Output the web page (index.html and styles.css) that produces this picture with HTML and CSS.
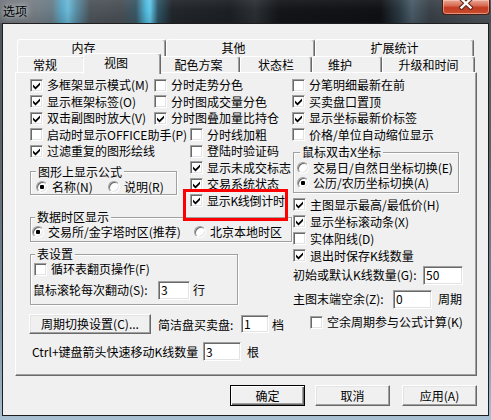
FILE: index.html
```html
<!DOCTYPE html>
<html lang="zh-CN">
<head>
<meta charset="utf-8">
<title>选项</title>
<link rel="stylesheet" href="styles.css">
</head>
<body>
<div class="win">
  <div class="titlebar">
    <span class="title">选项</span>
    <span class="close"><svg width="14" height="10" viewBox="0 0 14 10"><path d="M2.5 -1 L11.5 7.5 M11.5 -1 L2.5 7.5" stroke="#5b1f12" stroke-width="4.4" stroke-linecap="square"/><path d="M2.5 -1 L11.5 7.5 M11.5 -1 L2.5 7.5" stroke="#fff" stroke-width="2.4" stroke-linecap="square"/></svg></span>
  </div>
  <div class="client">
    <div class="tabctl">
      <div class="tabrow back">
        <div class="tab">内存</div>
        <div class="tab">其他</div>
        <div class="tab">扩展统计</div>
      </div>
      <div class="tabrow front">
        <div class="tab">常规</div>
        <div class="tab sel">视图</div>
        <div class="tab">配色方案</div>
        <div class="tab">状态栏</div>
        <div class="tab">维护</div>
        <div class="tab">升级和时间</div>
      </div>
      <div class="panel">
        <div class="left">
          <div class="ab">
            <div class="colA">
              <div class="cb-row"><span class="box"><svg viewBox="0 0 11 11"><path d="M2 4.5 L4.5 7 L9 2.5 L9 5 L4.5 9.5 L2 7 Z"/></svg></span>多框架显示模式(M)</div>
              <div class="cb-row"><span class="box"><svg viewBox="0 0 11 11"><path d="M2 4.5 L4.5 7 L9 2.5 L9 5 L4.5 9.5 L2 7 Z"/></svg></span>显示框架标签(O)</div>
              <div class="cb-row"><span class="box"><svg viewBox="0 0 11 11"><path d="M2 4.5 L4.5 7 L9 2.5 L9 5 L4.5 9.5 L2 7 Z"/></svg></span>双击副图时放大(V)</div>
              <div class="cb-row"><span class="box"></span>启动时显示OFFICE助手(P)</div>
              <div class="cb-row"><span class="box"><svg viewBox="0 0 11 11"><path d="M2 4.5 L4.5 7 L9 2.5 L9 5 L4.5 9.5 L2 7 Z"/></svg></span>过滤重复的图形绘线</div>
              <fieldset class="grp g1">
                <legend class="lg0">图形上显示公式</legend>
                <div class="rrow">
                  <span class="opt o1"><span class="rad on"></span>名称(N)</span>
                  <span class="opt"><span class="rad"></span>说明(R)</span>
                </div>
              </fieldset>
            </div>
            <div class="colB">
              <div class="cb-row"><span class="box"></span>分时走势分色</div>
              <div class="cb-row"><span class="box"></span>分时图成交量分色</div>
              <div class="cb-row"><span class="box"><svg viewBox="0 0 11 11"><path d="M2 4.5 L4.5 7 L9 2.5 L9 5 L4.5 9.5 L2 7 Z"/></svg></span>分时图叠加量比持仓</div>
              <div class="cb-row ind"><span class="box"></span>分时线加粗</div>
              <div class="cb-row ind"><span class="box"></span>登陆时验证码</div>
              <div class="cb-row ind"><span class="box"><svg viewBox="0 0 11 11"><path d="M2 4.5 L4.5 7 L9 2.5 L9 5 L4.5 9.5 L2 7 Z"/></svg></span>显示未成交标志</div>
              <div class="cb-row ind"><span class="box"><svg viewBox="0 0 11 11"><path d="M2 4.5 L4.5 7 L9 2.5 L9 5 L4.5 9.5 L2 7 Z"/></svg></span>交易系统状态</div>
              <div class="cb-row ind kline"><span class="box"><svg viewBox="0 0 11 11"><path d="M2 4.5 L4.5 7 L9 2.5 L9 5 L4.5 9.5 L2 7 Z"/></svg></span><span class="tight">显示K线倒计时</span><span class="mark"></span></div>
            </div>
          </div>
          <fieldset class="grp g2">
            <legend class="lg4">数据时区显示</legend>
            <div class="rrow r16">
              <span class="opt o2"><span class="rad on"></span>交易所/金字塔时区(推荐)</span>
              <span class="opt"><span class="rad"></span>北京本地时区</span>
            </div>
          </fieldset>
          <fieldset class="grp g3">
            <legend class="lg4">表设置</legend>
            <div class="cb-row h16 ml3"><span class="box"></span>循环表翻页操作(F)</div>
            <div class="inrow ir1">
              <span class="lbl w125">鼠标滚轮每次翻动(S):</span>
              <span class="edit e32">3</span>
              <span class="after3">行</span>
            </div>
          </fieldset>
          <div class="btnrow">
            <span class="btn bw122">周期切换设置(C)...</span>
            <span class="lbl w83 ml7">简洁盘买卖盘:</span>
            <span class="edit e28">1</span>
            <span class="after3">档</span>
          </div>
          <div class="ctrlrow">
            <span class="lbl w171">Ctrl+键盘箭头快速移动K线数量</span>
            <span class="edit e38">3</span>
            <span class="after6">根</span>
          </div>
        </div>
        <div class="right">
          <div class="cb-row mlm1"><span class="box"></span>分笔明细最新在前</div>
          <div class="cb-row mlm1"><span class="box"><svg viewBox="0 0 11 11"><path d="M2 4.5 L4.5 7 L9 2.5 L9 5 L4.5 9.5 L2 7 Z"/></svg></span>买卖盘口置顶</div>
          <div class="cb-row mlm1"><span class="box"><svg viewBox="0 0 11 11"><path d="M2 4.5 L4.5 7 L9 2.5 L9 5 L4.5 9.5 L2 7 Z"/></svg></span>显示坐标最新价标签</div>
          <div class="cb-row mlm1"><span class="box"></span>价格/单位自动缩位显示</div>
          <fieldset class="grp g4">
            <legend class="lg6">鼠标双击X坐标</legend>
            <div class="rrow r155 ml3"><span class="opt"><span class="rad"></span>交易日/自然日坐标切换(E)</span></div>
            <div class="rrow r155 ml3"><span class="opt"><span class="rad on"></span>公历/农历坐标切换(A)</span></div>
          </fieldset>
          <div class="checks4">
            <div class="cb-row h17"><span class="box"><svg viewBox="0 0 11 11"><path d="M2 4.5 L4.5 7 L9 2.5 L9 5 L4.5 9.5 L2 7 Z"/></svg></span>主图显示最高/最低价(H)</div>
            <div class="cb-row h17"><span class="box"><svg viewBox="0 0 11 11"><path d="M2 4.5 L4.5 7 L9 2.5 L9 5 L4.5 9.5 L2 7 Z"/></svg></span>显示坐标滚动条(X)</div>
            <div class="cb-row h17"><span class="box"></span>实体阳线(D)</div>
            <div class="cb-row h17"><span class="box"><svg viewBox="0 0 11 11"><path d="M2 4.5 L4.5 7 L9 2.5 L9 5 L4.5 9.5 L2 7 Z"/></svg></span>退出时保存K线数量</div>
          </div>
          <div class="inrow ir2">
            <span class="lbl w130">初始或默认K线数量(G):</span>
            <span class="edit e40">50</span>
          </div>
          <div class="inrow ir3">
            <span class="lbl w100">主图末端空余(Z):</span>
            <span class="edit e39">0</span>
            <span class="after6">周期</span>
          </div>
          <div class="cb-row h16 last"><span class="box"></span>空余周期参与公式计算(K)</div>
        </div>
      </div>
    </div>
    <div class="btns">
      <span class="btn def">确定</span>
      <span class="btn g10">取消</span>
      <span class="btn g12">应用(A)</span>
    </div>
  </div>
</div>
</body>
</html>
```
FILE: styles.css
```css
* { box-sizing: border-box; }
html, body { margin: 0; padding: 0; }
body {
  width: 491px;
  height: 420px;
  overflow: hidden;
  font-family: "Noto Sans CJK SC", "Noto Sans", sans-serif;
  font-size: 12px;
  color: #000;
  background: #2a2e33;
}
.win {
  width: 491px;
  height: 420px;
  display: flex;
  flex-direction: column;
  background: linear-gradient(180deg, #4c5257 0, #5d636a 150px, #7890a6 330px, #a9bfd2 420px);
}
.titlebar {
  height: 23px;
  flex: none;
  display: flex;
  justify-content: space-between;
  align-items: flex-start;
  background:
    linear-gradient(180deg, rgba(255,255,255,0.06) 0, rgba(0,0,0,0) 10px, rgba(0,0,0,0.12) 23px),
    linear-gradient(90deg, #6f757a 0, #797f84 30px, #6a7d88 52px, #5aa7c6 62px, #6cb9d6 68px, #5a8fa6 76px, #4e555b 90px, #4b5056 120px, #3a5866 136px, #4fb8dc 146px, #63c8ea 150px, #2e5566 158px, #22272b 172px, #1c2024 230px, #2b3034 255px, #131518 280px, #0f1114 380px, #2c3a44 400px, #4a5c68 412px, #3a4148 430px, #4e565d 491px);
}
.title {
  margin: 4px 0 0 3px;
  line-height: 14px;
  text-shadow: 0 0 5px rgba(215,225,230,0.9), 0 0 9px rgba(215,225,230,0.7);
}
.close {
  width: 48px;
  height: 15px;
  margin-right: 1px;
  border: 1px solid #4a1c12;
  border-top: none;
  border-radius: 0 0 4px 4px;
  background: linear-gradient(180deg, #e9a896 0, #d86a52 40%, #c23b20 55%, #c94e31 100%);
  box-shadow: inset 0 0 0 1px rgba(255,215,200,0.5);
  display: flex;
  justify-content: center;
  align-items: flex-start;
}
.close svg { display: block; }

.client {
  flex: 1;
  margin: 0 2px 4px 2px;
  border: 1px solid #1e1e1e;
  background: #f0f0f0;
}
.tabctl {
  margin: 15px 0 0 12px;
  width: 462px;
}
.tabrow { display: flex; padding-left: 2px; }
.back { height: 17px; }
.front { height: 16px; }
.tab {
  flex: none;
  height: 100%;
  border-top: 1px solid #fff;
  border-left: 1px solid #fff;
  border-right: 1px solid #696969;
  border-radius: 3px 3px 0 0;
  box-shadow: inset -1px 0 0 #a0a0a0;
  display: flex;
  align-items: center;
  justify-content: center;
  line-height: 14px;
  background: #f0f0f0;
  white-space: nowrap;
}
.back .tab:nth-child(1) { width: 149px; padding-right: 16px; }
.back .tab:nth-child(2) { width: 149px; padding-right: 14px; }
.back .tab:nth-child(3) { width: 159px; }
.front .tab:nth-child(1) { width: 68px; padding-right: 12px; }
.front .tab:nth-child(2) { width: 74px; }
.front .tab:nth-child(3) { width: 81px; padding-right: 2px; }
.front .tab:nth-child(4) { width: 72px; }
.front .tab:nth-child(5) { width: 70px; padding-right: 14px; }
.front .tab:nth-child(6) { width: 93px; }
.front .tab.sel {
  position: relative;
  z-index: 1;
  width: 78px;
  height: 21px;
  margin: -3px -2px -2px -2px;
  padding: 0 12px 3px 0;
}

.panel {
  height: 304px;
  border: 1px solid;
  border-color: #fff #696969 #696969 #fff;
  box-shadow: inset -1px -1px 0 #a0a0a0;
  padding: 4px 0 0 14px;
  display: flex;
}
.left {
  width: 263px;
  flex: none;
  display: flex;
  flex-direction: column;
}
.right { flex: 1; min-width: 0; }
.ab {
  display: grid;
  grid-template-columns: 124px 139px;
  align-items: start;
}

.cb-row {
  display: flex;
  align-items: center;
  height: 16.5px;
  line-height: 14px;
  white-space: nowrap;
}
.cb-row.ind { margin-left: 36px; }
.cb-row.h16 { height: 16px; }
.cb-row.h17 { height: 17px; }
.tight { letter-spacing: -0.3px; }
.box {
  width: 13px;
  height: 13px;
  flex: none;
  margin-right: 4px;
  background: #fff;
  border: 1px solid;
  border-color: #a0a0a0 #fff #fff #a0a0a0;
  box-shadow: inset 1px 1px 0 #696969, inset -1px -1px 0 #e3e3e3;
}
.box svg { display: block; width: 11px; height: 11px; fill: #000; }

.rad {
  width: 12px;
  height: 12px;
  flex: none;
  margin-right: 4px;
  border-radius: 50%;
  border: 1px solid;
  border-color: #a0a0a0 #fff #fff #a0a0a0;
  box-shadow: inset 1px 1px 0 #696969, inset -1px -1px 0 #e3e3e3;
  background: #fff;
  display: flex;
  align-items: center;
  justify-content: center;
}
.rad.on::after {
  content: "";
  width: 4px;
  height: 4px;
  background: #000;
  border-radius: 1px;
}
.rrow {
  display: flex;
  align-items: center;
  height: 14px;
  line-height: 14px;
  white-space: nowrap;
}
.rrow.r155 { height: 15.5px; }
.rrow.r16 { height: 16px; }
.opt { display: flex; align-items: center; }
.o1 { width: 72px; }
.o2 { width: 162px; }

.grp {
  margin: 0;
  padding: 0;
  min-width: 0;
  border: 1px solid #a0a0a0;
  box-shadow: inset 1px 1px 0 #fff, 1px 1px 0 #fff;
}
.grp legend {
  padding: 0 2px;
  line-height: 14px;
  background: #f0f0f0;
  white-space: nowrap;
}
.lg0 { margin-left: 5px; }
.lg4 { margin-left: 4px; }
.lg6 { margin-left: 6px; }
.g1 { width: 147px; margin-top: 5px; padding-top: 1.5px; }
.g1 .rrow { padding-left: 5px; }
.g2 { width: 262px; margin-top: 1px; padding-bottom: 1px; }
.g2 .rrow { padding-left: 1px; }
.g3 { width: 208px; margin-top: 5px; padding-bottom: 4px; }
.g4 { width: 166px; margin-top: 2px; padding: 1px 0 1px 0; }
.ml3 { margin-left: 3px; }
.ml7 { margin-left: 7px; }
.mlm1 { margin-left: -1px; }

.inrow {
  display: flex;
  align-items: center;
  height: 20px;
  line-height: 14px;
  white-space: nowrap;
}
.ir1 { margin-top: 3px; margin-left: 2px; }
.ir2 { margin-top: 1px; }
.ir3 { margin-top: 4px; }
.checks4 { margin-top: 3px; }
.cb-row.last { margin-top: 5px; margin-left: 17px; }

.lbl { flex: none; white-space: nowrap; }
.w83 { width: 83px; }
.w100 { width: 100px; }
.w125 { width: 125px; }
.w130 { width: 130px; }
.w171 { width: 171px; }
.after3 { margin-left: 3px; }
.after6 { margin-left: 6px; }

.edit {
  flex: none;
  height: 19px;
  background: #fff;
  border: 1px solid;
  border-color: #a0a0a0 #fff #fff #a0a0a0;
  box-shadow: inset 1px 1px 0 #696969, inset -1px -1px 0 #e3e3e3;
  padding-left: 2px;
  display: flex;
  align-items: center;
  line-height: 14px;
}
.e28 { width: 28px; height: 18px; }
.e32 { width: 32px; }
.e38 { width: 38px; }
.e39 { width: 39px; }
.e40 { width: 40px; }

.btnrow {
  margin-top: 9px;
  margin-left: -1px;
  display: flex;
  align-items: center;
  height: 20px;
  white-space: nowrap;
}
.ctrlrow {
  margin-top: 8px;
  margin-left: 2px;
  display: flex;
  align-items: center;
  height: 19px;
  white-space: nowrap;
}

.btn {
  flex: none;
  display: flex;
  align-items: center;
  justify-content: center;
  width: 75px;
  height: 21px;
  background: #f0f0f0;
  border: 1px solid;
  border-color: #fff #696969 #696969 #fff;
  box-shadow: inset -1px -1px 0 #a0a0a0, inset 1px 1px 0 #e3e3e3;
  line-height: 14px;
  white-space: nowrap;
}
.btn.bw122 { width: 122px; height: 20px; }
.btn.def {
  border-color: #000;
  box-shadow: inset 1px 1px 0 #fff, inset -1px -1px 0 #696969, inset -2px -2px 0 #a0a0a0;
}
.btns {
  display: flex;
  justify-content: flex-end;
  margin: 9px 11px 0 0;
}
.g10 { margin-left: 10px; }
.g12 { margin-left: 12px; }

.kline { position: relative; }
.mark {
  position: absolute;
  left: -7px;
  top: -3.5px;
  width: 105px;
  height: 32px;
  border: 3px solid #f00;
  pointer-events: none;
}
```
